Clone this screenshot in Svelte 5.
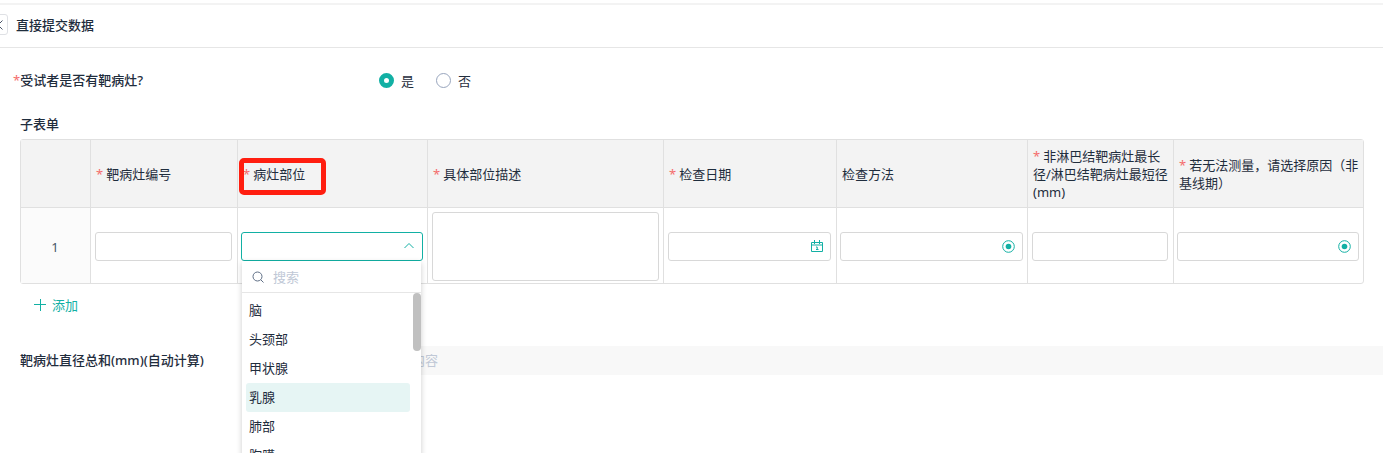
<script lang="ts">
  const columns = [
    { key: "code", title: "靶病灶编号", required: true, type: "text", width: 147 },
    { key: "site", title: "病灶部位", required: true, type: "tree", width: 190 },
    { key: "desc", title: "具体部位描述", required: true, type: "area", width: 236 },
    { key: "date", title: "检查日期", required: true, type: "date", width: 173 },
    { key: "method", title: "检查方法", required: false, type: "pick", width: 191 },
    { key: "size", title: "非淋巴结靶病灶最长径/淋巴结靶病灶最短径(mm)", required: true, type: "text", width: 146 },
    { key: "reason", title: "若无法测量，请选择原因（非基线期）", required: true, type: "pick", width: 189 }
  ];
  const sites = ["脑", "头颈部", "甲状腺", "乳腺", "肺部", "胸膜"];

  let hasLesion = $state("yes");
  let keyword = $state("");
  let active = $state("乳腺");
  let rows = $state([1]);
  let open = $state(true);

  let shown = $derived(sites.filter((s) => s.includes(keyword)));

  function choose(site: string) {
    active = site;
    open = false;
  }
</script>

<div class="page">
  <header>
    <button class="back" aria-label="返回">
      <svg viewBox="0 0 12 12" width="12" height="12"><path d="M10.500 1.500 6 6l4.500 4.500" /></svg>
    </button>
    <h1>直接提交数据</h1>
  </header>

  <main>
    <div class="field" role="radiogroup" aria-labelledby="lesion-label">
      <span class="label required" id="lesion-label">受试者是否有靶病灶?</span>
      <div class="radios">
        <label><input type="radio" name="lesion" value="yes" bind:group={hasLesion} />是</label>
        <label><input type="radio" name="lesion" value="no" bind:group={hasLesion} />否</label>
      </div>
    </div>

    <h2>子表单</h2>
    <table>
      <colgroup>
        <col class="num" />
        {#each columns as col}
          <col style="width: {col.width}px" />
        {/each}
      </colgroup>
      <thead>
        <tr>
          <th></th>
          {#each columns as col}
            <th>
              {#if col.required}<span class="star">*</span>{/if}{col.title}
              {#if col.key === "site"}<span class="mark"></span>{/if}
            </th>
          {/each}
        </tr>
      </thead>
      <tbody>
        {#each rows as row}
          <tr>
            <td class="index">{row}</td>
            {#each columns as col}
              <td class={col.type}>
                {#if col.type === "area"}
                  <textarea aria-label={col.title}></textarea>
                {:else if col.type === "date"}
                  <div class="control">
                    <input type="text" aria-label={col.title} />
                    <svg class="icon" viewBox="0 0 12 12" width="12" height="12">
                      <path d="M.5 2.500h11v9H.5zM.5 5h11M3.500 0v4M8.500 0v4M5 7h1.200v2.800M5 9.500h2.500" />
                    </svg>
                  </div>
                {:else if col.type === "tree"}
                  <div class="control">
                    <select class:open={open && row === 1} aria-label={col.title}></select>
                    <svg class="icon" viewBox="0 0 12 12" width="12" height="12"><path d="M1.500 8 6 3.500 10.500 8" /></svg>
                    {#if open && row === 1}
                      <div class="panel">
                        <div class="search">
                          <svg viewBox="0 0 12 12" width="12" height="12">
                            <circle cx="5.500" cy="5.500" r="4.500" />
                            <path d="m8.800 8.800 2.700 2.700" />
                          </svg>
                          <input type="text" placeholder="搜索" aria-label="搜索" bind:value={keyword} />
                        </div>
                        <div class="list">
                          <ul>
                            {#each shown as site}
                              <li><button class:active={site === active} onclick={() => choose(site)}>{site}</button></li>
                            {/each}
                          </ul>
                          <div class="thumb"></div>
                        </div>
                      </div>
                    {/if}
                  </div>
                {:else if col.type === "pick"}
                  <div class="control">
                    <select aria-label={col.title}></select>
                    <svg class="icon" viewBox="0 0 13 13" width="13" height="13">
                      <circle cx="6.500" cy="6.500" r="5.800" />
                      <circle class="dot" cx="6.500" cy="6.500" r="2.800" />
                    </svg>
                  </div>
                {:else}
                  <input type="text" aria-label={col.title} />
                {/if}
              </td>
            {/each}
          </tr>
        {/each}
      </tbody>
    </table>
    <button class="add" onclick={() => rows.push(rows.length + 1)}>
      <svg viewBox="0 0 12 12" width="12" height="12"><path d="M6.500 0v12M0 5.500h12" /></svg>
      添加
    </button>

    <div class="field total">
      <label class="label" for="total">靶病灶直径总和(mm)(自动计算)</label>
      <input id="total" type="text" placeholder="请输入内容" readonly />
    </div>
  </main>
</div>

<style>
  :global(body) {
    margin: 0;
    background: #fff;
  }

  .page {
    height: 100vh;
    overflow: hidden;
    color: #1f2d3d;
    font-family: "Noto Sans", "Noto Sans CJK SC", sans-serif;
    font-size: 13px;
    line-height: 18px;
  }

  .page * {
    box-sizing: border-box;
  }

  button, input, select, textarea {
    font: inherit;
    color: inherit;
  }

  button {
    border: 0;
    background: none;
    padding: 0;
    cursor: pointer;
  }

  svg {
    fill: none;
    stroke: #12b0a4;
    flex: none;
  }

  header {
    display: flex;
    align-items: center;
    gap: 8px;
    height: 45px;
    margin-top: 3px;
    padding-bottom: 3px;
    border-top: 2px solid #f3f3f3;
    border-bottom: 1px solid #e6e6e6;
  }

  .back {
    display: flex;
    align-items: center;
    justify-content: center;
    width: 20px;
    height: 21px;
    margin-left: -12px;
    border: 1px solid #dfe1e5;
    border-radius: 3px;
  }

  .back svg {
    stroke: #4a5568;
  }

  h1, h2, .label {
    margin: 0;
    font-size: 13px;
    font-weight: 500;
  }

  main {
    padding: 18px 0 0 20px;
  }

  .field {
    display: flex;
    align-items: center;
    height: 29px;
  }

  .label {
    flex: none;
    width: 345px;
    padding-bottom: 2px;
  }

  .required::before {
    content: "*";
    color: #f56c6c;
    margin-left: -7px;
    font-weight: 400;
  }

  .radios {
    display: flex;
    gap: 22px;
    padding-left: 14px;
  }

  .radios label {
    display: flex;
    align-items: center;
    gap: 7px;
  }

  .radios input {
    appearance: none;
    width: 15px;
    height: 15px;
    margin: 0;
    border: 1px solid #98a5bd;
    border-radius: 50%;
  }

  .radios input:checked {
    border: 5px solid #12b0a4;
  }

  h2 {
    padding: 20px 0 6px;
  }

  table {
    width: calc(100% - 19px);
    table-layout: fixed;
    border: 1px solid #e0e0e0;
    border-radius: 3px;
    border-collapse: separate;
    border-spacing: 0;
  }

  .num {
    width: 70px;
  }

  th {
    position: relative;
    height: 68px;
    padding: 0 2px 0 5px;
    background: #f3f3f3;
    border-right: 1px solid #e0e0e0;
    border-bottom: 1px solid #e0e0e0;
    font-weight: 400;
    text-align: left;
  }

  td {
    height: 75px;
    padding: 4px 5px 2px 4px;
    border-right: 1px solid #e0e0e0;
  }

  th:last-child, td:last-child {
    border-right: 0;
  }

  td.tree, td.pick {
    padding: 4px 4px 2px 3px;
  }

  td.area {
    padding: 4px 4px 2px 4px;
  }

  td.index {
    background: #fbfbfb;
    color: #4a5568;
    text-align: center;
  }

  .star {
    margin-right: 3px;
    color: #f56c6c;
  }

  .mark {
    position: absolute;
    top: 18px;
    left: 1px;
    width: 87px;
    height: 37px;
    border: 5px solid #ff1e10;
    border-radius: 5px;
  }

  td > input, .control > input, select, textarea {
    display: block;
    width: 100%;
    height: 29px;
    margin: 0;
    padding: 0 8px;
    border: 1px solid #d8d8d8;
    border-radius: 3px;
    background: #fff;
    appearance: none;
    outline: 0;
  }

  textarea {
    height: 69px;
    resize: none;
  }

  select.open {
    border-color: #12b0a4;
  }

  .control {
    position: relative;
  }

  .icon {
    position: absolute;
    top: 8px;
    right: 8px;
  }

  .dot {
    fill: #12b0a4;
    stroke: none;
  }

  .panel {
    position: absolute;
    z-index: 2;
    top: 100%;
    left: 1px;
    right: 2px;
    background: #fff;
    box-shadow: 0 2px 6px rgba(0, 0, 0, 0.2);
  }

  .search {
    display: flex;
    align-items: center;
    gap: 9px;
    height: 32px;
    padding: 0 10px;
    border-bottom: 1px solid #e6e6e6;
  }

  .search svg {
    stroke: #5f6f86;
  }

  .search input {
    min-width: 0;
    flex: 1;
    border: 0;
    padding: 0;
    background: none;
    outline: 0;
  }

  input::placeholder {
    color: #c0c8d6;
    opacity: 1;
  }

  .list {
    display: flex;
    align-items: flex-start;
    height: 200px;
    overflow: hidden;
  }

  ul {
    flex: 1;
    margin: 0;
    padding: 3px 3px 0 4px;
    list-style: none;
  }

  li button {
    display: block;
    width: 100%;
    height: 29px;
    padding: 0 3px 2px;
    border-radius: 3px;
    text-align: left;
  }

  li .active {
    background: #e6f5f4;
  }

  .thumb {
    width: 8px;
    height: 58px;
    border-radius: 4px;
    background: #c0c0c0;
  }

  .add {
    display: flex;
    align-items: center;
    gap: 6px;
    height: 42px;
    padding: 0 14px;
    color: #12b0a4;
  }

  .total {
    margin-top: 20px;
  }

  .total input {
    flex: 1;
    height: 29px;
    padding: 0 8px 2px;
    border: 0;
    background: #f8f8f8;
  }
</style>
